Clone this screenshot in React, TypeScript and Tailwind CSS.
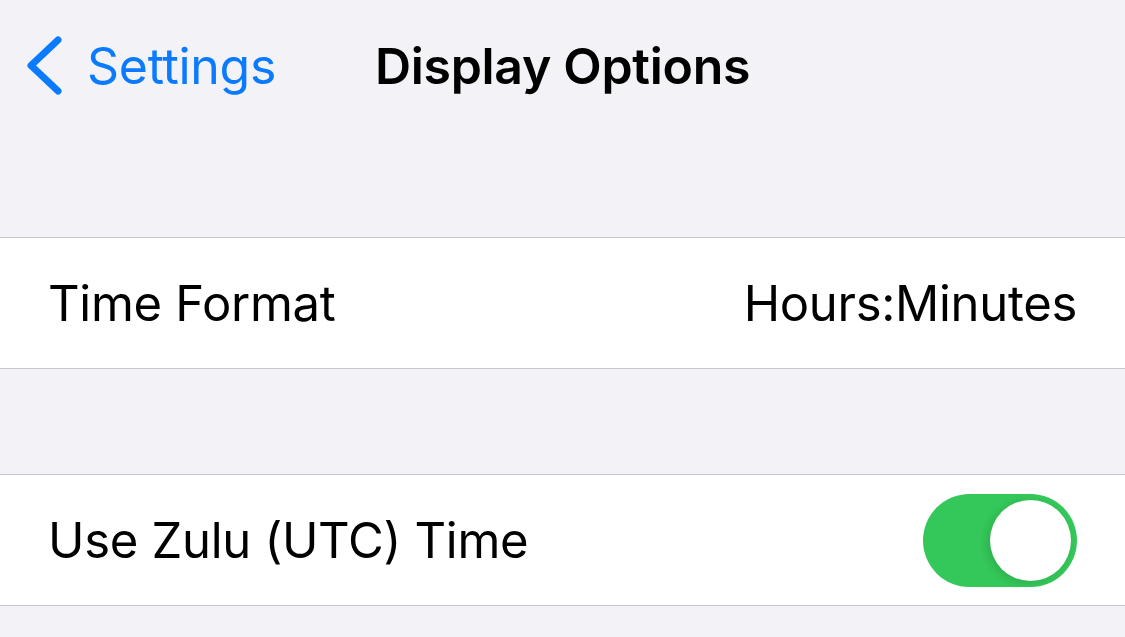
export default function App() {
  return (
    <div
      className="w-[1125px] h-[637px] overflow-hidden bg-[#f2f2f7] text-black"
      style={{ fontFamily: "Inter, 'Noto Sans', sans-serif" }}
    >
      {/* nav bar */}
      <header className="grid grid-cols-[1fr_auto_1fr] items-center h-[132px]">
        <button className="flex items-center gap-[21px] pl-[26px] text-[#0a7aff] text-[50px] leading-none">
          <svg width="40" height="60" viewBox="0 0 40 60" fill="none">
            <path
              d="M32 4 L5 29.5 L32 55"
              stroke="currentColor"
              strokeWidth="7"
              strokeLinecap="round"
              strokeLinejoin="round"
            />
          </svg>
          <span className="tracking-[-0.3px]">Settings</span>
        </button>
        <h1 className="text-[50px] font-semibold leading-none tracking-[-0.3px]">Display Options</h1>
        <div />
      </header>

      <div className="h-[105px]" />

      <div className="flex items-center justify-between h-[132px] bg-white border-y border-[#c8c7cc] pl-[48px] pr-[48px] text-[49px] leading-none tracking-[-0.3px]">
        <span>Time Format</span>
        <span>Hours:Minutes</span>
      </div>

      <div className="h-[105px]" />

      <div className="flex items-center justify-between h-[132px] bg-white border-y border-[#c8c7cc] pl-[48px] pr-[48px] text-[49px] leading-none tracking-[-0.3px]">
        <span>Use Zulu (UTC) Time</span>
        <div className="flex items-center justify-end w-[154px] h-[93px] rounded-full bg-[#34c759] p-[6px]">
          <div className="w-[81px] h-[81px] rounded-full bg-white shadow-[-3px_2px_8px_rgba(0,0,0,0.12)]" />
        </div>
      </div>
    </div>
  );
}
